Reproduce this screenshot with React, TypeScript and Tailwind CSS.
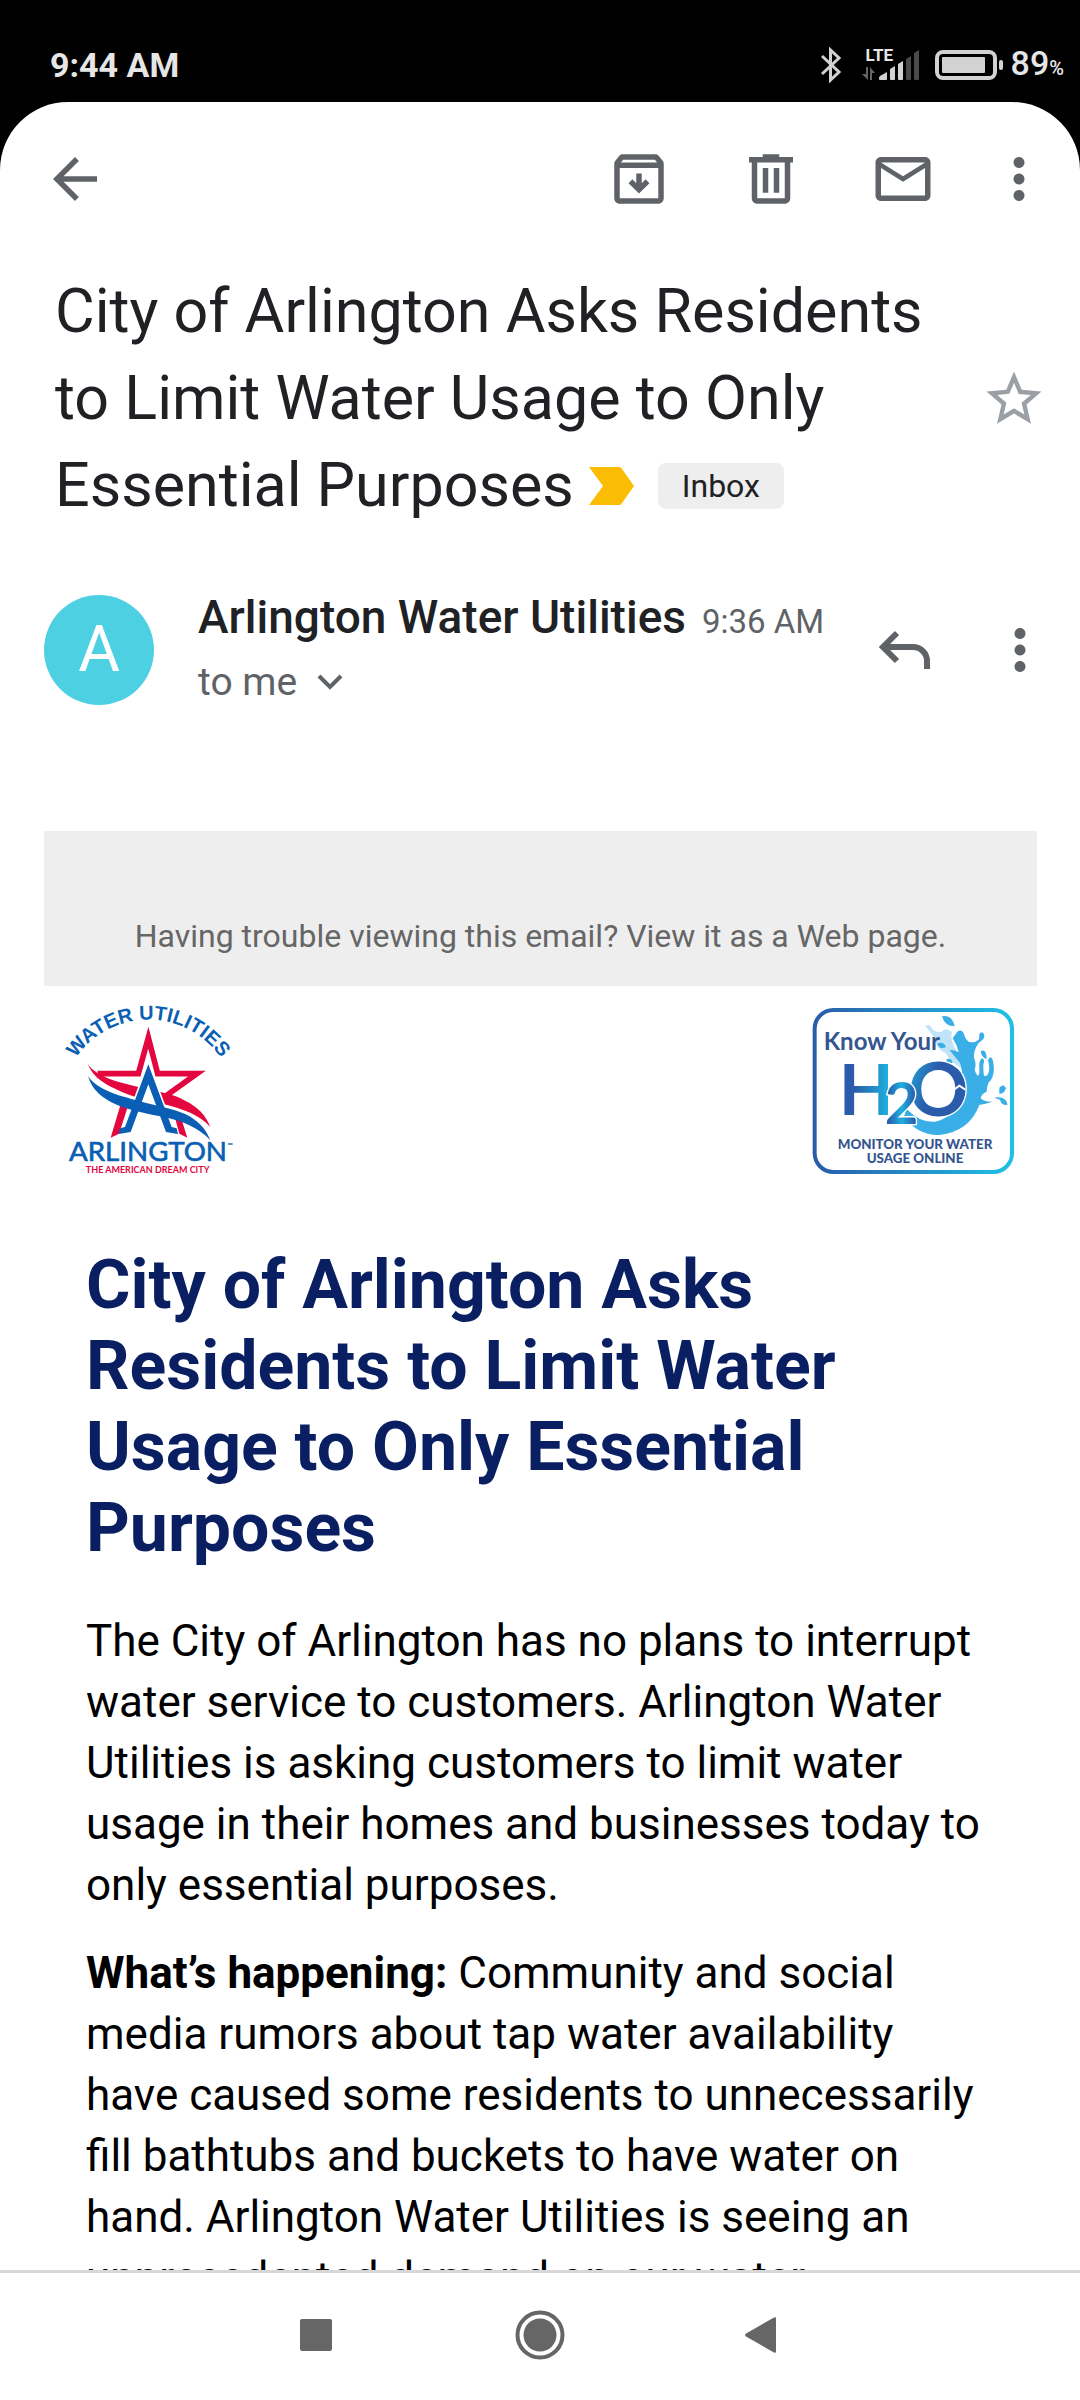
import type { ReactNode } from 'react';

const TITLE = 'City of Arlington Asks Residents to Limit Water Usage to Only Essential Purposes';

function IconButton({ label, children }: { label: string; children: ReactNode }) {
  return (
    <button type="button" aria-label={label} className="size-[66px] shrink-0 text-[#5f6368]">
      {children}
    </button>
  );
}

function Glyph({ d }: { d: string }) {
  return (
    <svg viewBox="0 0 24 24" fill="currentColor" className="size-full" aria-hidden="true">
      <path d={d} />
    </svg>
  );
}

const icons = {
  back: 'M20 11H7.83l5.59-5.59L12 4l-8 8 8 8 1.41-1.41L7.83 13H20v-2z',
  archive:
    'M20.54 5.23l-1.39-1.68C18.88 3.21 18.47 3 18 3H6c-.47 0-.88.21-1.16.55L3.46 5.23C3.17 5.57 3 6.02 3 6.5V19c0 1.1.9 2 2 2h14c1.1 0 2-.9 2-2V6.5c0-.48-.17-.93-.46-1.27zM6.24 5h11.52l.83 1H5.42l.82-1zM5 19V8h14v11H5zM11 10h2v3.5l1.4-1.4 1.4 1.4L12 17.3l-3.8-3.8 1.4-1.4 1.4 1.4z',
  trash:
    'M15 4V3H9v1H4v2h1v13c0 1.1.9 2 2 2h10c1.1 0 2-.9 2-2V6h1V4h-5zm2 15H7V6h10v13zM9 8h2v9H9zm4 0h2v9h-2z',
  mail: 'M20 4H4c-1.1 0-2 .9-2 2v12c0 1.1.9 2 2 2h16c1.1 0 2-.9 2-2V6c0-1.1-.9-2-2-2zm0 14H4V8l8 5 8-5v10zm-8-7L4 6h16l-8 5z',
  more: 'M12 8c1.1 0 2-.9 2-2s-.9-2-2-2-2 .9-2 2 .9 2 2 2zm0 2c-1.1 0-2 .9-2 2s.9 2 2 2 2-.9 2-2-.9-2-2-2zm0 6c-1.1 0-2 .9-2 2s.9 2 2 2 2-.9 2-2-.9-2-2-2z',
  star: 'M22 9.24l-7.19-.62L12 2 9.19 8.63 2 9.24l5.46 4.73L5.82 21 12 17.27 18.18 21l-1.63-7.03L22 9.24zM12 15.4l-3.76 2.27 1-4.28-3.32-2.88 4.38-.38L12 6.1l1.71 4.04 4.38.38-3.32 2.88 1 4.28L12 15.4z',
};

function StatusBar() {
  return (
    <div className="flex h-[102px] shrink-0 items-center justify-between pt-7 pr-4 pl-[50px] text-[#e6e6e6]">
      <span className="text-[34px] leading-10 font-bold">9:44 AM</span>
      <div className="flex items-center">
        <svg viewBox="0 0 22 36" className="h-9 w-[22px]" fill="none" stroke="#d2d2d2" strokeWidth="3" aria-label="Bluetooth">
          <path d="M2 9l17 16-8.500 8V3l8.500 8L2 27" />
        </svg>
        <div className="relative ml-5 h-9 w-[58px]">
          <span className="absolute -top-0.5 left-1 text-[17px] leading-5 font-bold">LTE</span>
          <svg viewBox="0 0 58 36" className="size-full" aria-hidden="true">
            <g fill="#666">
              <path d="M4 20h2v13L0 27h4zM8 33V20l5 6h-3v7z" />
            </g>
            <g fill="#d2d2d2">
              <path d="M17 31q0-1 1-2l7-4v7q0 1-1 1h-6q-1 0-1-1z" />
              <path d="M28 22l5-3v13q0 1-1 1h-3q-1 0-1-1z" />
              <path d="M36 17l5-3v18q0 1-1 1h-3q-1 0-1-1z" />
            </g>
            <g fill="#4a4a4a">
              <path d="M44 12l5-3v23q0 1-1 1h-3q-1 0-1-1z" />
              <path d="M52 6l5-3v29q0 1-1 1h-3q-1 0-1-1z" />
            </g>
          </svg>
        </div>
        <svg viewBox="0 0 68 30" className="ml-[15px] h-[30px] w-[68px]" aria-label="Battery">
          <rect x="2" y="2" width="58" height="26" rx="6" fill="none" stroke="#d2d2d2" strokeWidth="4" />
          <rect x="7" y="7" width="43" height="16" rx="1" fill="#d2d2d2" />
          <rect x="64" y="10" width="4" height="10" rx="2" fill="#d2d2d2" />
        </svg>
        <span className="ml-2 text-[34px] leading-10 font-medium">
          89<span className="text-[20px]">%</span>
        </span>
      </div>
    </div>
  );
}

function Toolbar() {
  return (
    <header className="flex items-center justify-between pt-11 pr-7 pl-[42px]">
      <IconButton label="Back">
        <Glyph d={icons.back} />
      </IconButton>
      <div className="flex gap-[50px]">
        <div className="flex gap-[66px]">
          <IconButton label="Archive">
            <Glyph d={icons.archive} />
          </IconButton>
          <IconButton label="Delete">
            <Glyph d={icons.trash} />
          </IconButton>
          <IconButton label="Mark as unread">
            <Glyph d={icons.mail} />
          </IconButton>
        </div>
        <IconButton label="More options">
          <Glyph d={icons.more} />
        </IconButton>
      </div>
    </header>
  );
}

function Subject() {
  return (
    <div className="flex items-center justify-between gap-4 pt-14 pr-[33px] pl-[55px]">
      <h1 className="text-[61px] leading-[87px] text-[#202124]">
        {TITLE}
        <span className="ml-[15px] inline-flex items-center gap-6 pb-2 align-middle">
          <svg viewBox="0 0 45 38" className="h-[38px] w-[45px]" aria-label="Important">
            <path d="M0 0h30q2 0 3 2l12 17-12 17q-1 2-3 2H0l14-19z" fill="#fbbc04" />
          </svg>
          <span className="rounded-lg bg-[#eee] px-6 text-[32px] leading-[46px]">Inbox</span>
        </span>
      </h1>
      <button type="button" aria-label="Star" className="size-[66px] shrink-0 text-[#9aa0a6]">
        <Glyph d={icons.star} />
      </button>
    </div>
  );
}

function Sender() {
  return (
    <div className="flex items-center pt-[58px] pr-[27px] pl-11">
      <div className="flex size-[110px] shrink-0 items-center justify-center rounded-full bg-[#4dd0e1] text-[64px] text-white">
        A
      </div>
      <div className="ml-11 flex-1">
        <div className="flex items-baseline gap-4 leading-[60px]">
          <span className="text-[46px] font-medium text-[#202124]">Arlington Water Utilities</span>
          <span className="text-[33px] text-[#5f6368]">9:36 AM</span>
        </div>
        <button type="button" className="flex items-center gap-5 text-[39px] leading-[60px] text-[#5f6368]">
          to me
          <svg viewBox="0 0 26 16" className="h-4 w-[26px]" fill="none" stroke="currentColor" strokeWidth="4" aria-hidden="true">
            <path d="M2 2l11 11L24 2" />
          </svg>
        </button>
      </div>
      <div className="flex gap-[50px]">
        <IconButton label="Reply">
          <svg viewBox="0 0 66 66" className="size-full" fill="none" stroke="currentColor" strokeWidth="6" aria-hidden="true">
            <path d="M26 16L12 30l14 14M12 30h30a14 14 0 0 1 14 14v8" />
          </svg>
        </IconButton>
        <IconButton label="More options for this message">
          <Glyph d={icons.more} />
        </IconButton>
      </div>
    </div>
  );
}

function ArlingtonLogo() {
  return (
    <svg viewBox="75 65 525 525" className="size-[175px]" fontFamily="Lato, sans-serif" role="img" aria-label="Arlington Water Utilities">
      <path id="arc" d="M65 381a263 263 0 0 1 526 0" fill="none" />
      <text fill="#0a5fb4" fontSize="60" fontWeight="700" fontFamily="Liberation Sans, sans-serif" textAnchor="middle">
        <textPath href="#arc" startOffset="50%">
          WATER UTILITIES
        </textPath>
      </text>
      {/* star and upper ribbon */}
      <g fill="#e4063f">
        <path d="M176 280H298L328 172L356 280H474L376 350" fill="none" stroke="#e4063f" strokeWidth="17" />
        <path d="M246 368l22 6-28 86-25 12zM408 412l20 6 17 54-24-12z" />
        <path d="M146 250C172 290 240 306 300 320C350 334 400 338 440 362C476 380 500 404 514 440C480 402 430 386 376 372C320 360 270 346 230 326C190 308 160 286 146 250z" />
      </g>
      {/* letter mark and lower ribbon */}
      <path d="M328 236L252 444L328 470L404 444z" fill="#fff" />
      <g fill="#0a5fb4">
        <path d="M328 252L398 440L413 444L417 461L381 455L328 312L275 455L239 461L243 444L258 440z" />
        <path d="M147 288C176 330 240 346 300 362C350 376 400 384 440 402C476 420 500 444 514 480C480 442 430 422 376 410C320 400 270 390 230 372C190 354 160 330 147 288z" />
      </g>
      <text x="327" y="543" fill="#0a5fb4" fontSize="83" stroke="#0a5fb4" strokeWidth="2" textAnchor="middle">
        ARLINGTON
      </text>
      <path d="M567 491h14" stroke="#0a5fb4" strokeWidth="4" />
      <text x="326" y="579" fill="#e4063f" fontSize="27" fontWeight="700" textAnchor="middle">
        THE AMERICAN DREAM CITY
      </text>
    </svg>
  );
}

function WaterUsageLogo() {
  return (
    <svg viewBox="60 70 621 516" className="h-[172px] w-[207px]" fontFamily="Lato, sans-serif" fontWeight="700" role="img" aria-label="Know Your H2O">
      <defs>
        <linearGradient id="frame">
          <stop offset="0" stopColor="#2a5caa" />
          <stop offset="1" stopColor="#1fc0e6" />
        </linearGradient>
        <linearGradient id="letterH">
          <stop offset="0.3" stopColor="#2a5cab" />
          <stop offset="0.9" stopColor="#1fb0de" />
        </linearGradient>
        <linearGradient id="letterTwo">
          <stop offset="0.1" stopColor="#2a5cab" />
          <stop offset="0.5" stopColor="#1fb0de" />
          <stop offset="0.9" stopColor="#2a5cab" />
        </linearGradient>
        <linearGradient id="letterO" y2="0.5">
          <stop offset="0" stopColor="#1fb8e2" />
          <stop offset="0.5" stopColor="#2a5cab" />
        </linearGradient>
      </defs>
      <rect x="74" y="85" width="592" height="486" rx="56" fill="#fff" stroke="url(#frame)" strokeWidth="12" />
      {/* splash */}
      <path
        d="M406 133q12-8 18 4 6 16 30 14 14-16 32 0-8 22 14 58 38 34 44 94l-26-40q-34-20-52-50-26-8-30-42-16-20-30-38z"
        fill="#bfe4fa"
      />
      <g fill="#3aaee6">
        <path d="M456 104q30-6 38 30-30 0-38-30zM442 186q18-8 26 10-18 10-26-10zM468 234q16-8 20 10-16 2-20-10z" />
        <path d="M502 150q12-10 20 6 2 14 14 24 16 6 30-6l2-8q-2-12 8-14 12 6 4 20-8 8-14 12-16 22-14 44 8 18 2 36 2 10 10 20 6-10 4-26-2-22 8-28 10 2 4 20 0 24 2 32 10 4 14-10 4-16-2-36 8-18 14-2 6 24 2 42-4 18-14 26-6 14-6 28-16 6-18 20 12 12 36 10-16 6-40 10-30 80-120 90-66 2-106-56l8-22q40 42 86 38 74-16 70-100l8-36q4-20-4-40l-32-40q16 0 28 8-4-22-18-42z" />
        <path d="M572 208q18-8 18 24-16-4-18-24zM628 318q14-14 20 2-6 18-20 16zM612 348q38-6 40 22-18 2-22-16z" />
      </g>
      <text x="101" y="205" fontSize="72" fill="#34558e">
        Know Your
      </text>
      <text x="146" y="401" fontSize="214" fill="url(#letterH)">
        H
      </text>
      <text x="355" y="402" fontSize="223" fill="url(#letterO)" stroke="#fff" strokeWidth="8" paintOrder="stroke">
        O
      </text>
      <path d="M490 326l18-14 18 12" fill="none" stroke="#fff" strokeWidth="6" />
      <text x="284" y="428" fontSize="174" fill="url(#letterTwo)" stroke="#fff" strokeWidth="8" paintOrder="stroke">
        2
      </text>
      <g fontSize="40" fontWeight="900" fill="#34558e" textAnchor="middle">
        <text x="375" y="503">
          MONITOR YOUR WATER
        </text>
        <text x="375" y="543">
          USAGE ONLINE
        </text>
      </g>
    </svg>
  );
}

function EmailBody() {
  return (
    <article className="mt-[119px] min-h-0 flex-1 overflow-hidden pr-[43px] pl-11">
      <div className="bg-[#eee] pt-20 pb-[25px] text-center text-[32px] leading-[50px] text-[#666]">
        Having trouble viewing this email?{' '}
        <a href="#web">View it as a Web page.</a>
      </div>
      <div className="flex items-end justify-between px-5 pt-4">
        <ArlingtonLogo />
        <WaterUsageLogo />
      </div>
      <div className="px-[42px] pt-[68px]">
        <h2 className="text-[68px] leading-[81px] font-bold text-[#0a1f62]">{TITLE}</h2>
        <p className="mt-[42px] text-[44px] leading-[61px] text-black">
          The City of Arlington has no plans to interrupt water service to customers. Arlington Water
          Utilities is asking customers to limit water usage in their homes and businesses today to only
          essential purposes.
        </p>
        <p className="mt-[27px] text-[44px] leading-[61px] text-black">
          <strong>What’s happening:</strong> Community and social media rumors about tap water availability
          have caused some residents to unnecessarily fill bathtubs and buckets to have water on hand.
          Arlington Water Utilities is seeing an unprecedented demand on our water
        </p>
      </div>
    </article>
  );
}

function NavBar() {
  return (
    <nav className="flex h-[130px] shrink-0 items-center justify-center gap-[173px] border-t-[3px] border-[#d8d8d8] bg-white pb-1 text-[#666]">
      <button type="button" aria-label="Recent apps" className="size-[50px]">
        <svg viewBox="0 0 50 50" fill="currentColor" aria-hidden="true">
          <rect x="8" y="9" width="32" height="32" rx="2" />
        </svg>
      </button>
      <button type="button" aria-label="Home" className="size-[50px]">
        <svg viewBox="0 0 50 50" fill="currentColor" aria-hidden="true">
          <circle cx="25" cy="25" r="22.500" fill="none" stroke="currentColor" strokeWidth="4" />
          <circle cx="25" cy="25" r="16.500" />
        </svg>
      </button>
      <button type="button" aria-label="Back" className="size-[50px]">
        <svg viewBox="0 0 50 50" fill="currentColor" aria-hidden="true">
          <path d="M8 23.500L36 7.500q2-1 2 1v33q0 2-2 1L8 26.500q-2-1.500 0-3z" />
        </svg>
      </button>
    </nav>
  );
}

export default function App() {
  return (
    <div className="flex h-screen flex-col overflow-hidden bg-black font-[Roboto,sans-serif]">
      <StatusBar />
      <main className="flex min-h-0 flex-1 flex-col rounded-t-[68px] bg-white">
        <Toolbar />
        <Subject />
        <Sender />
        <EmailBody />
      </main>
      <NavBar />
    </div>
  );
}
